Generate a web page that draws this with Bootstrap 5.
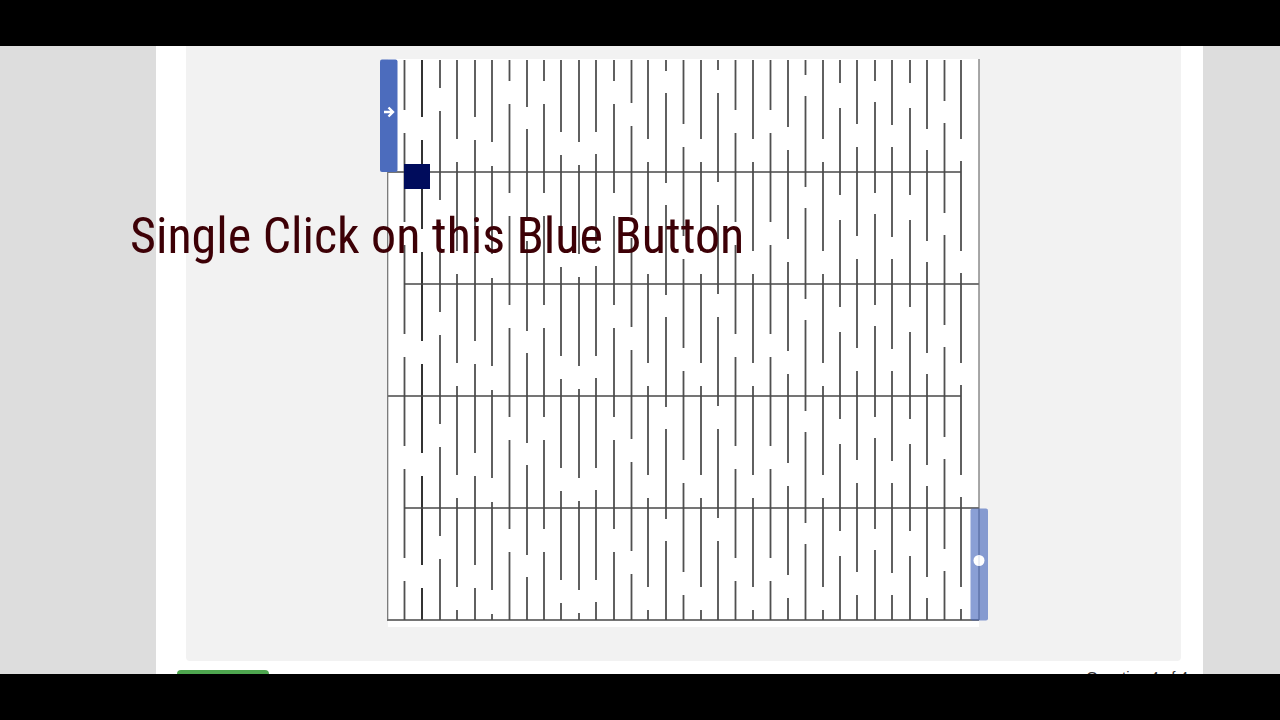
<!DOCTYPE html>
<html lang="en">
<head>
<meta charset="utf-8">
<meta name="viewport" content="width=device-width, initial-scale=1">
<title>Maze question</title>
<link href="https://cdn.jsdelivr.net/npm/bootstrap@5.3.0/dist/css/bootstrap.min.css" rel="stylesheet">
<style>
body { background: #000; font-family: "Liberation Sans", Arial, sans-serif; }
.letterbox { height: 46px; }
.stage { background: #ddd; padding: 0 77px 0 156px; min-height: 0; }
.sheet { background: #fff; padding: 0 22px 0 30px; }
.panel { background: #f2f2f2; border-radius: 0 0 4px 4px; padding: 13px 0 34px; }
.maze { width: 608px; }
.target { left: 24px; top: 105px; width: 26px; height: 25px; background: #000c5c; }
.caption { left: 130px; top: 160px; font: 50px/60px "Roboto Condensed", "Liberation Sans", sans-serif; color: #3d0006; }
.actions { padding-top: 9px; margin-left: -9px; margin-right: -7px; }
.submit { width: 92px; height: 36px; background: #4ea64f; border-radius: 4px; }
.counter { font-size: 15px; line-height: 14px; color: #333; }
</style>
</head>
<body class="d-flex flex-column vh-100 overflow-hidden">
<div class="letterbox flex-shrink-0"></div>
<main class="stage flex-fill position-relative overflow-hidden">
  <div class="sheet">
    <div class="panel">
      <div class="maze position-relative mx-auto">
        <svg class="d-block w-100" viewBox="0 0 608 568" role="img" aria-label="Maze">
          <defs>
            <path id="walls" d="M24.5 0V50M24.5 73V112M42 0V57M42 80V112M60 0V28M60 51V112M77 0V79M77 102V112M95 0V57M95 80V112M112 0V82M112 106V112M129.500 0V21M129.500 44V112M147 0V47M147 69V112M164 0V21M164 44V112M181 0V72M181 95V112M199 0V82M199 105V112M216 0V72M216 94V112M234 0V21M234 44V112M251.500 0V43M251.500 66V112M268 0V79M268 102V112M286 0V11M286 33V112M303.500 0V64M303.500 87V112M321 0V79M321 102V112M338 0V10M338 33V112M355.500 0V50M355.500 73V112M373 0V79M373 102V112M390.500 0V50M390.500 73V112M408 0V67M408 90V112M425.500 0V15M425.500 36V112M443 0V79M443 102V112M460 0V23M460 48V112M477 0V64M477 87V112M495 0V21M495 42V112M512 0V65M512 87V112M530 0V23M530 48V112M547 0V69M547 90V112M564.500 0V41M564.500 63V112M581 0V79M581 101V112"/>
          </defs>
          <rect x="8" width="591" height="568" fill="#fff"/>
          <g stroke="#505050" stroke-width="1.800">
            <use href="#walls" y="1"/>
            <use href="#walls" y="113"/>
            <use href="#walls" y="225"/>
            <use href="#walls" y="337"/>
            <use href="#walls" y="449"/>
          </g>
          <path d="M42 1V58M42 81V170M42 193V282M42 305V394M42 417V506M42 529V561" stroke="#333" stroke-width="2"/>
          <path d="M8 113H581M24 225H599M8 337H581M24 449H599M7 561H599" stroke="#484848" stroke-width="1.700"/>
          <path d="M7.700 113V561M599 0V561" stroke="#707070" stroke-width="1.200"/>
          <rect y="0.500" width="17.500" height="112.500" rx="2" fill="#4c6cbd"/>
          <path d="M4 53H12.500M8.500 48.500L13 53L8.500 57.500" fill="none" stroke="#fff" stroke-width="2.400"/>
          <rect x="590.500" y="449.500" width="17.500" height="112" rx="2" fill="#4567bc" fill-opacity=".63"/>
          <circle cx="599" cy="501.500" r="5.500" fill="#fff"/>
          <path d="M599 496V507" stroke="#d8deed"/>
        </svg>
        <button type="button" class="target btn rounded-0 border-0 p-0 position-absolute" aria-label="Blue button"></button>
      </div>
    </div>
    <div class="actions d-flex justify-content-between align-items-start">
      <button type="button" class="submit btn border-0 p-0" aria-label="Submit"></button>
      <span class="counter">Question 4 of 4</span>
    </div>
  </div>
  <p class="caption position-absolute text-nowrap m-0">Single Click on this Blue Button</p>
</main>
<div class="letterbox flex-shrink-0"></div>
<script src="https://cdn.jsdelivr.net/npm/bootstrap@5.3.0/dist/js/bootstrap.bundle.min.js"></script>
</body>
</html>
